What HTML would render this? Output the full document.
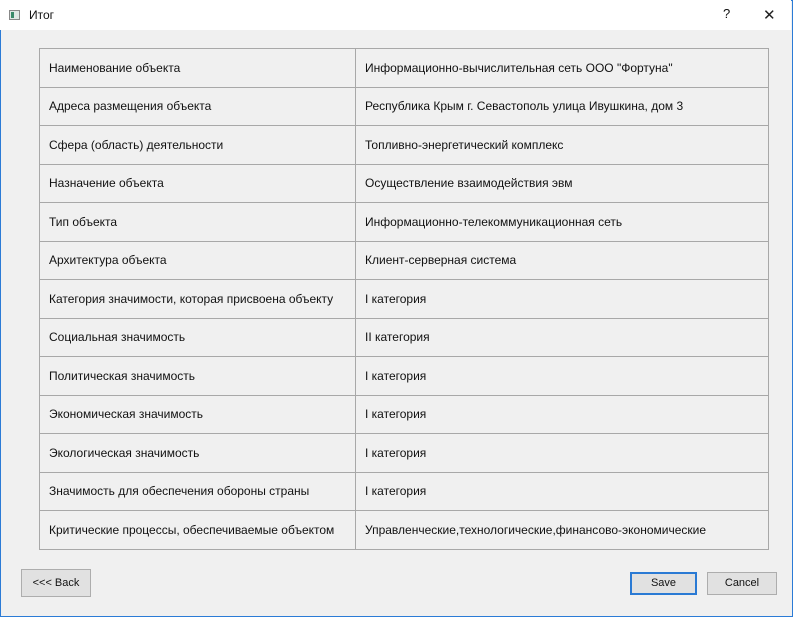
<!DOCTYPE html>
<html><head><meta charset="utf-8"><style>
*{margin:0;padding:0;box-sizing:border-box}
body{width:793px;height:617px;background:#f0f0f0;font-family:"Liberation Sans",sans-serif;font-size:12px;color:#111;position:relative;overflow:hidden}
.win{position:absolute;left:0;top:0;width:793px;height:617px;border:1px solid #2b7bd6;}
.title{position:absolute;left:0;top:0;width:791px;height:30px;background:#fff}
.title .ic{position:absolute;left:9px;top:10px;width:11px;height:10px;border:1px solid #888;background:#dfe8e4}
.title .ic:after{content:"";position:absolute;left:1px;top:1px;width:3px;height:6px;background:#3a8a6a}
.title .t{position:absolute;left:29px;top:8px;font-size:12px}
.title .q{position:absolute;left:723px;top:6px;font-size:13px}
.title .x{position:absolute;left:763px;top:6px;font-size:15px;font-weight:normal;font-family:"DejaVu Sans",sans-serif;color:#222}
table{position:absolute;left:39px;top:48px;width:730px;border-collapse:collapse}
td{border:1px solid #a8a8a8;height:38.5px;padding:0 0 0 9px;vertical-align:middle;white-space:nowrap}
td:first-child{width:316px}
.btn{position:absolute;height:23px;border:1px solid #adadad;background:#e1e1e1;text-align:center;line-height:21px;font-size:11px}
</style></head><body>
<div class="win"></div>
<div class="title"><div class="ic"></div><div class="t">Итог</div><div class="q">?</div><div class="x">✕</div></div>
<table>
<tr><td>Наименование объекта</td><td>Информационно-вычислительная сеть ООО "Фортуна"</td></tr>
<tr><td>Адреса размещения объекта</td><td>Республика Крым г. Севастополь улица Ивушкина, дом 3</td></tr>
<tr><td>Сфера (область) деятельности</td><td>Топливно-энергетический комплекс</td></tr>
<tr><td>Назначение объекта</td><td>Осуществление взаимодействия эвм</td></tr>
<tr><td>Тип объекта</td><td>Информационно-телекоммуникационная сеть</td></tr>
<tr><td>Архитектура объекта</td><td>Клиент-серверная система</td></tr>
<tr><td>Категория значимости, которая присвоена объекту</td><td>I категория</td></tr>
<tr><td>Социальная значимость</td><td>II категория</td></tr>
<tr><td>Политическая значимость</td><td>I категория</td></tr>
<tr><td>Экономическая значимость</td><td>I категория</td></tr>
<tr><td>Экологическая значимость</td><td>I категория</td></tr>
<tr><td>Значимость для обеспечения обороны страны</td><td>I категория</td></tr>
<tr><td>Критические процессы, обеспечиваемые объектом</td><td>Управленческие,технологические,финансово-экономические</td></tr>
</table>
<div class="btn" style="left:21px;top:569px;width:70px;height:28px;line-height:26px">&lt;&lt;&lt; Back</div>
<div class="btn" style="left:630px;top:572px;width:67px;border:2px solid #2a7ad4;line-height:19px">Save</div>
<div class="btn" style="left:707px;top:572px;width:70px">Cancel</div>
</body></html>
